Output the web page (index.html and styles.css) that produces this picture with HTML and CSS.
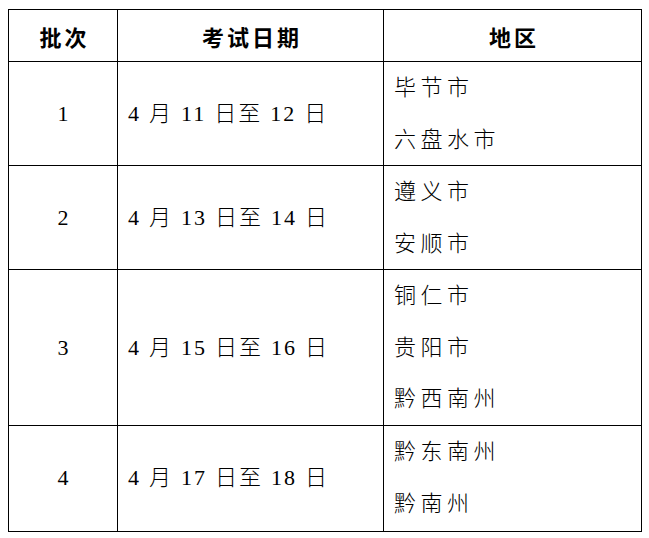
FILE: index.html
```html
<!DOCTYPE html>
<html lang="zh-CN">
<head>
<meta charset="utf-8">
<link rel="stylesheet" href="styles.css">
</head>
<body>
<table class="schedule">
  <colgroup>
    <col class="c1"><col class="c2"><col class="c3">
  </colgroup>
  <thead>
    <tr><th>批次</th><th>考试日期</th><th>地区</th></tr>
  </thead>
  <tbody>
    <tr>
      <td class="num">1</td>
      <td class="date">4 月 11 日至 12 日</td>
      <td class="area"><div>毕节市</div><div>六盘水市</div></td>
    </tr>
    <tr>
      <td class="num">2</td>
      <td class="date">4 月 13 日至 14 日</td>
      <td class="area"><div>遵义市</div><div>安顺市</div></td>
    </tr>
    <tr>
      <td class="num">3</td>
      <td class="date">4 月 15 日至 16 日</td>
      <td class="area"><div>铜仁市</div><div>贵阳市</div><div>黔西南州</div></td>
    </tr>
    <tr class="last">
      <td class="num">4</td>
      <td class="date">4 月 17 日至 18 日</td>
      <td class="area"><div>黔东南州</div><div>黔南州</div></td>
    </tr>
  </tbody>
</table>
</body>
</html>
```

FILE: styles.css
```css
html, body {
  margin: 0;
  padding: 0;
  background: #fff;
}
body {
  padding: 9px 8px;
  font-family: "Liberation Serif", "Noto Sans CJK SC", serif;
  color: #000;
}
.schedule {
  border-collapse: collapse;
  table-layout: fixed;
  width: 633px;
}
.c1 { width: 109px; }
.c2 { width: 266px; }
.c3 { width: 258px; }
.schedule th,
.schedule td {
  border: 1px solid #000;
  padding: 0;
  vertical-align: middle;
}
.schedule th {
  height: 51px;
  font-size: 22px;
  font-weight: bold;
  letter-spacing: 3px;
  text-align: center;
  text-indent: 3px;
}
.schedule td {
  font-size: 22px;
  font-weight: 300;
  line-height: 51.5px;
}
.schedule .last td {
  line-height: 52.5px;
}
.num {
  text-align: center;
}
.date {
  padding-left: 10px !important;
  word-spacing: 0.5px;
  letter-spacing: 2px;
  white-space: nowrap;
}
.area {
  padding-left: 10px !important;
  letter-spacing: 4.5px;
}
```
